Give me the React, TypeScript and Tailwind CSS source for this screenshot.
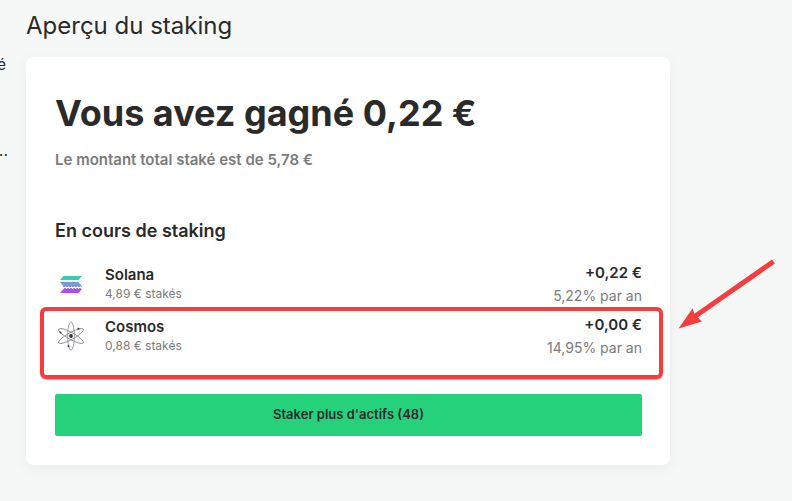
import React from "react";

type Asset = {
  name: string;
  staked: string;
  earned: string;
  rate: string;
  icon: React.ReactNode;
  highlighted?: boolean;
};

function SolanaIcon() {
  return (
    <svg width="32" height="32" viewBox="0 0 32 32" aria-hidden="true">
      <path d="M8.5 8h18.5l-3.5 4H5z" fill="#35cdb4" />
      <path d="M5 14h18.5l3.5 4.500H8.500z" fill="#739fd8" />
      <path d="M8.500 21h18.500L23.500 25H5z" fill="#ad4df0" />
      <path d="M8 18.500h19M9 20.500h17" stroke="#a17be4" strokeDasharray="2 1" fill="none" />
    </svg>
  );
}

function CosmosIcon() {
  return (
    <svg width="32" height="32" viewBox="0 0 32 32" fill="none" aria-hidden="true">
      <g stroke="#85858e" strokeWidth="0.8">
        <ellipse cx="16" cy="16" rx="3.400" ry="14.200" />
        <ellipse cx="16" cy="16" rx="3.400" ry="14.200" transform="rotate(61 16 16)" />
        <ellipse cx="16" cy="16" rx="3.400" ry="14.200" transform="rotate(119 16 16)" />
      </g>
      <g fill="#333338">
        <circle cx="16" cy="16" r="1.900" />
        <circle cx="23.500" cy="8.800" r="1" />
        <circle cx="5.500" cy="12.500" r="1" />
        <circle cx="13.500" cy="26" r="1" />
      </g>
    </svg>
  );
}

const assets: Asset[] = [
  { name: "Solana", staked: "4,89 € stakés", earned: "+0,22 €", rate: "5,22% par an", icon: <SolanaIcon /> },
  { name: "Cosmos", staked: "0,88 € stakés", earned: "+0,00 €", rate: "14,95% par an", icon: <CosmosIcon />, highlighted: true },
];

function AssetRow({ asset }: { asset: Asset }) {
  return (
    <li className="relative flex h-13 items-center">
      <div className="w-[50px] shrink-0">{asset.icon}</div>
      <div className="flex-1">
        <p className="text-[15px] leading-5 font-semibold">{asset.name}</p>
        <p className="text-xs leading-[18px] text-[#7b7b7b]">{asset.staked}</p>
      </div>
      <div className="text-right">
        <p className="text-[15px] leading-6 font-semibold">{asset.earned}</p>
        <p className="text-sm leading-[22px] text-[#7b7b7b]">{asset.rate}</p>
      </div>
      {asset.highlighted && (
        <>
          <div className="pointer-events-none absolute -top-[3px] -right-[21px] -bottom-[17px] -left-[15px] rounded-md border-4 border-[#f53d3d] shadow-[0_1px_1px_rgba(0,0,0,0.3)]" />
          <svg
            className="pointer-events-none absolute -top-[54px] -right-[136px]"
            width="100"
            height="76"
            viewBox="0 0 100 76"
            aria-hidden="true"
          >
            <path d="M95.500 5.500L16 61" stroke="#f53d3d" strokeWidth="5" />
            <path d="M0.500 72.500L14.500 52.500L17 59L24 65.500Z" fill="#f53d3d" />
          </svg>
        </>
      )}
    </li>
  );
}

export default function App() {
  return (
    <div className="flex min-h-screen overflow-hidden bg-[#f6f8f7] font-['Inter',sans-serif] text-[#2a2a2a]">
      <aside className="flex w-[26px] shrink-0 flex-col pt-[53px] leading-6">
        <p className="w-[6px] text-[15px] leading-6">
          <span className="float-right">é</span>
        </p>
        <p className="mt-[61px] w-2">
          <span className="float-right">..</span>
        </p>
      </aside>
      <main className="min-w-0 flex-1 pt-2 pr-[122px] pb-9">
        <h1 className="text-2xl leading-9 font-normal">Aperçu du staking</h1>
        <section className="mt-[13px] rounded-lg bg-white pt-8 pr-7 pb-[29px] pl-[29px] shadow-[0_4px_16px_rgba(0,0,0,0.05)]">
          <h2 className="text-4xl leading-12 font-bold">Vous avez gagné 0,22 €</h2>
          <p className="mt-[11px] text-[15px] leading-6 font-semibold text-[#7b7b7b]">
            Le montant total staké est de 5,78 €
          </p>
          <h3 className="mt-[47px] text-lg leading-6 font-semibold">En cours de staking</h3>
          <ul className="mt-[15px]">
            {assets.map((asset) => (
              <AssetRow key={asset.name} asset={asset} />
            ))}
          </ul>
          <button
            type="button"
            className="mt-8 h-[42px] w-full rounded-xs bg-[#26d17c] text-[13px] font-semibold"
          >
            Staker plus d'actifs (48)
          </button>
        </section>
      </main>
    </div>
  );
}
